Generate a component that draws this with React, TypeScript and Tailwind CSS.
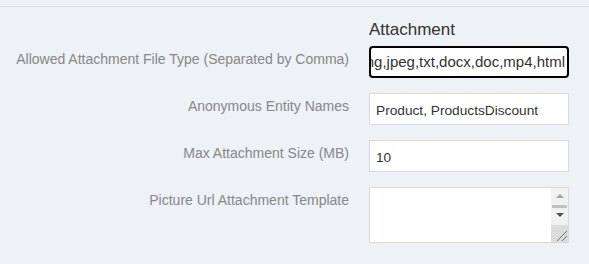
import React from "react";

const font = { fontFamily: '"Liberation Sans", Arial, sans-serif' };

function Label({ children }: { children: React.ReactNode }) {
  return (
    <label className="block pt-[4px] text-right text-[14px] leading-[18px] text-[#888888] whitespace-nowrap">
      {children}
    </label>
  );
}

export default function App() {
  return (
    <div className="min-h-screen w-full bg-[#eef1f5]" style={font}>
      <div className="h-[6px]" />
      <div className="border-t border-[#e0e3e7] pt-[13px]">
        <div className="grid grid-cols-[349px_200px] gap-x-5">
          <div />
          <h3 className="text-[17px] leading-[20px] text-[#333333] font-normal">Attachment</h3>
        </div>
        <div className="mt-[6px] flex flex-col gap-[15px]">
          <div className="grid grid-cols-[349px_200px] gap-x-5">
            <Label>Allowed Attachment File Type (Separated by Comma)</Label>
            <div className="h-8 border-2 border-black rounded-[4px] bg-white overflow-hidden flex items-center justify-end pr-[2px] pt-[1px]">
              <span className="whitespace-nowrap text-[15px] text-[#333333]">
                jpg,png,jpeg,txt,docx,doc,mp4,html
              </span>
            </div>
          </div>
          <div className="grid grid-cols-[349px_200px] gap-x-5">
            <Label>Anonymous Entity Names</Label>
            <input
              readOnly
              defaultValue="Product, ProductsDiscount"
              className="h-8 w-[200px] border border-[#d8dadf] bg-white px-[6px] pt-[2px] text-[13.7px] text-[#333333] outline-none"
              style={font}
            />
          </div>
          <div className="grid grid-cols-[349px_200px] gap-x-5">
            <Label>Max Attachment Size (MB)</Label>
            <input
              readOnly
              defaultValue="10"
              className="h-8 w-[200px] border border-[#d8dadf] bg-white px-[6px] pt-[2px] text-[13.7px] text-[#333333] outline-none"
              style={font}
            />
          </div>
          <div className="grid grid-cols-[349px_200px] gap-x-5">
            <Label>Picture Url Attachment Template</Label>
            <div className="h-[56px] w-[200px] border border-[#d8dadf] bg-white flex">
              <textarea
                readOnly
                className="flex-1 h-full resize-none outline-none bg-white px-[6px] py-[4px] text-[13.7px] text-[#333333]"
                style={font}
              />
              <div className="w-[17px] h-full flex flex-col bg-[#f1f1f1]">
                <div className="h-[16px] flex items-center justify-center">
                  <svg width="8" height="4" viewBox="0 0 8 4">
                    <polygon points="0,4 8,4 4,0" fill="#a3a3a3" />
                  </svg>
                </div>
                <div className="h-[4px] px-[1px] pt-[0.5px]">
                  <div className="h-[3px] bg-[#c1c1c1]" />
                </div>
                <div className="h-[13px] flex items-center justify-center">
                  <svg width="8" height="4" viewBox="0 0 8 4">
                    <polygon points="0,0 8,0 4,4" fill="#505050" />
                  </svg>
                </div>
                <div className="h-[4px]" />
                <div className="h-[17px] bg-[#dcdcdc]">
                  <svg width="17" height="17" viewBox="0 0 17 17" className="block">
                    <line x1="6" y1="16" x2="16" y2="6" stroke="#6e6e6e" strokeWidth="1" />
                    <line x1="11" y1="16" x2="16" y2="11" stroke="#6e6e6e" strokeWidth="1" />
                  </svg>
                </div>
              </div>
            </div>
          </div>
        </div>
      </div>
    </div>
  );
}
